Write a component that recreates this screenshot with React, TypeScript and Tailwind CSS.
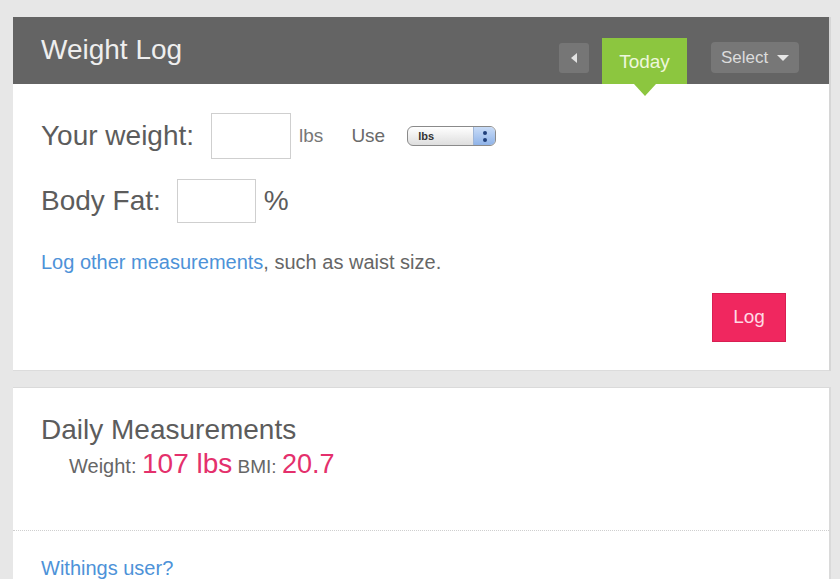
import React from "react";

export default function App() {
  return (
    <div
      className="w-[840px] h-[579px] overflow-hidden bg-[#e7e7e7] pt-[17px] pl-[13px] flex flex-col gap-[16px]"
      style={{ fontFamily: '"Liberation Sans", Arial, Helvetica, sans-serif' }}
    >
      {/* Weight Log panel */}
      <div className="w-[818px] border-r-[2px] border-[#d6d6d6] shrink-0">
        <div className="h-[67px] bg-[#646464] flex items-center pl-[28px] pr-[30px]">
          <div className="text-[28px] leading-[32px] text-[#eeeeee] mt-[-1px]">Weight Log</div>
          <div className="ml-auto flex items-end h-full">
            <div className="w-[30px] h-[30px] mb-[11px] rounded-[3px] bg-[#767676] flex items-center justify-center">
              <div className="w-0 h-0 border-t-[5px] border-b-[5px] border-r-[6px] border-t-transparent border-b-transparent border-r-[#e2e2e2]" />
            </div>
            <div className="relative ml-[13px] w-[85px] h-[46px] bg-[#8cc63f] flex items-center justify-center">
              <span className="text-[19px] text-[#eef7dc] mt-[2px]">Today</span>
              <div className="absolute left-1/2 top-full -translate-x-1/2 w-0 h-0 border-l-[11px] border-r-[11px] border-t-[12px] border-l-transparent border-r-transparent border-t-[#8cc63f] z-10" />
            </div>
            <div className="ml-[24px] mb-[11px] w-[88px] h-[31px] rounded-[4px] bg-[#777777] flex items-center justify-center gap-[9px]">
              <span className="text-[17px] text-[#dcdcdc]">Select</span>
              <div className="w-0 h-0 border-l-[6px] border-r-[6px] border-t-[6px] border-l-transparent border-r-transparent border-t-[#e6e6e6]" />
            </div>
          </div>
        </div>
        <div className="bg-white pl-[28px] pr-[43px] pt-[29px] pb-[28px] border-b border-[#dcdcdc]">
          <div className="flex items-center h-[46px]">
            <span className="text-[28px] text-[#5c5c5c]">Your weight:</span>
            <div className="ml-[17px] w-[80px] h-[46px] border border-[#cfcfcf] bg-white" />
            <span className="ml-[8px] text-[19px] text-[#777777]">lbs</span>
            <span className="ml-[28px] text-[19px] text-[#6a6a6a]">Use</span>
            <div className="ml-[22px] w-[89px] h-[20px] rounded-[6px] border border-[#8a8a8a] flex overflow-hidden bg-gradient-to-b from-[#ffffff] to-[#dedede]">
              <span className="flex-1 text-[11px] font-bold text-[#333333] leading-[18px] pl-[10px]">lbs</span>
              <div className="w-[22px] h-full bg-gradient-to-b from-[#c9dcf7] to-[#8fb3e8] flex flex-col items-center justify-center gap-[3px] border-l border-[#9fb6d8]">
                <div className="w-[4px] h-[4px] rounded-full bg-[#1f3f7a]" />
                <div className="w-[4px] h-[4px] rounded-full bg-[#1f3f7a]" />
              </div>
            </div>
          </div>
          <div className="flex items-center h-[44px] mt-[20px]">
            <span className="text-[28px] text-[#5c5c5c]">Body Fat:</span>
            <div className="ml-[16px] w-[79px] h-[44px] border border-[#cfcfcf] bg-white" />
            <span className="ml-[8px] text-[28px] text-[#5c5c5c]">%</span>
          </div>
          <div className="mt-[28px] text-[20px] leading-[22px] text-[#666666]">
            <span className="text-[#4d92d8]">Log other measurements</span>, such as waist size.
          </div>
          <div className="flex justify-end mt-[20px]">
            <div className="w-[74px] h-[49px] bg-[#f0275f] border border-[#d81f52] flex items-center justify-center">
              <span className="text-[19px] text-[#ffd9e4]">Log</span>
            </div>
          </div>
        </div>
      </div>

      {/* Daily Measurements panel */}
      <div className="w-[818px] flex-1 bg-white border-r-[2px] border-t border-[#dadada]">
        <div className="pl-[28px] pt-[26px]">
          <div className="text-[28px] leading-[32px] text-[#5c5c5c]">Daily Measurements</div>
          <div className="pl-[28px] mt-[2px] leading-[32px] text-[#666666]">
            <span className="text-[20px]">Weight: </span>
            <span className="text-[28px] text-[#e4306c]">107 lbs</span>
            <span className="text-[19px]"> BMI: </span>
            <span className="text-[27px] text-[#e4306c]">20.7</span>
          </div>
        </div>
        <div className="mt-[46px] border-t border-dotted border-[#cfcfcf]" />
        <div className="pl-[28px] pt-[26px] text-[20px] leading-[22px] text-[#4d92d8]">Withings user?</div>
      </div>
    </div>
  );
}
